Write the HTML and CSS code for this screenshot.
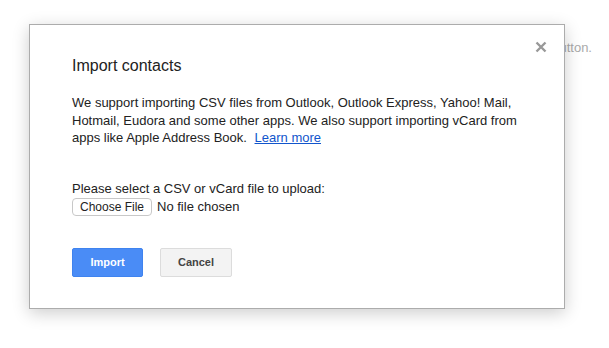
FILE: index.html
```html
<!DOCTYPE html>
<html lang="en">
<head>
  <meta charset="UTF-8" />
  <meta name="viewport" content="width=device-width, initial-scale=1.0"/>
  <title>Import contacts</title>
  <link rel="stylesheet" href="styles.css">
</head>
<body>

<div class="page">
  <p class="hint">Choose a file, then click the Import button.</p>
</div>

<div class="dialog">
  <button class="close" title="Close">
    <svg width="12" height="12" viewBox="0 0 12 12"><path d="M1.5 1.5 L10.5 10.5 M10.5 1.5 L1.5 10.5" stroke="#999" stroke-width="2.4" fill="none"/></svg>
  </button>

  <h1>Import contacts</h1>

  <p class="desc">We support importing CSV files from Outlook, Outlook Express, Yahoo! Mail, Hotmail, Eudora and some other apps. We also support importing vCard from apps like Apple Address Book. <a href="#">Learn more</a></p>

  <div class="upload">
    <div class="upload-label">Please select a CSV or vCard file to upload:</div>
    <input type="file" class="file">
  </div>

  <div class="actions">
    <button class="btn btn-primary">Import</button>
    <button class="btn">Cancel</button>
  </div>
</div>

</body>
</html>
```

FILE: styles.css
```css
* { margin: 0; padding: 0; box-sizing: border-box; }

body {
  font-family: Arial, 'Liberation Sans', sans-serif;
  font-size: 13px;
  background: #fff;
  color: #222;
  height: 100vh;
  overflow: hidden;
}

.page {
  padding: 39px 17px 0 0;
  text-align: right;
}

.hint {
  line-height: 17px;
  color: #aaa;
}

.dialog {
  position: absolute;
  left: 29px;
  top: 24px;
  width: 536px;
  background: #fff;
  border: 1px solid #acacac;
  box-shadow: 0 4px 16px rgba(0,0,0,0.2);
  padding: 31px 34px 31px 42px;
}

.close {
  position: absolute;
  top: 16px;
  right: 17px;
  width: 12px;
  height: 12px;
  border: none;
  background: none;
  cursor: pointer;
  display: flex;
}

h1 {
  font-size: 16px;
  font-weight: normal;
  line-height: 20px;
  color: #222;
  margin-bottom: 18px;
}

.desc {
  line-height: 17.5px;
  color: #222;
}

.desc a {
  margin-left: 4px;
  color: #15c;
}

.upload {
  margin-top: 33px;
}

.upload-label {
  line-height: 17px;
}

.file {
  display: block;
  margin-top: 1px;
  height: 18px;
  font-family: Arial, 'Liberation Sans', sans-serif;
  font-size: 13px;
  color: #222;
}

.file::file-selector-button {
  font-family: Arial, 'Liberation Sans', sans-serif;
  font-size: 12px;
  height: 18px;
  padding: 0 7px;
  margin-right: 5px;
  border: 1px solid #c8c8c8;
  border-radius: 4px;
  background: #fff;
  color: #222;
}

.actions {
  display: flex;
  gap: 17px;
  margin-top: 32px;
}

.btn {
  min-width: 71px;
  height: 29px;
  padding: 0 8px;
  font-family: Arial, 'Liberation Sans', sans-serif;
  font-size: 11px;
  font-weight: bold;
  color: #444;
  background: #f3f3f3;
  border: 1px solid #dcdcdc;
  border-radius: 2px;
  cursor: pointer;
}

.btn + .btn { min-width: 72px; }

.btn-primary {
  background: #4a8cf6;
  border-color: #3f83ef;
  color: #fff;
}
```
